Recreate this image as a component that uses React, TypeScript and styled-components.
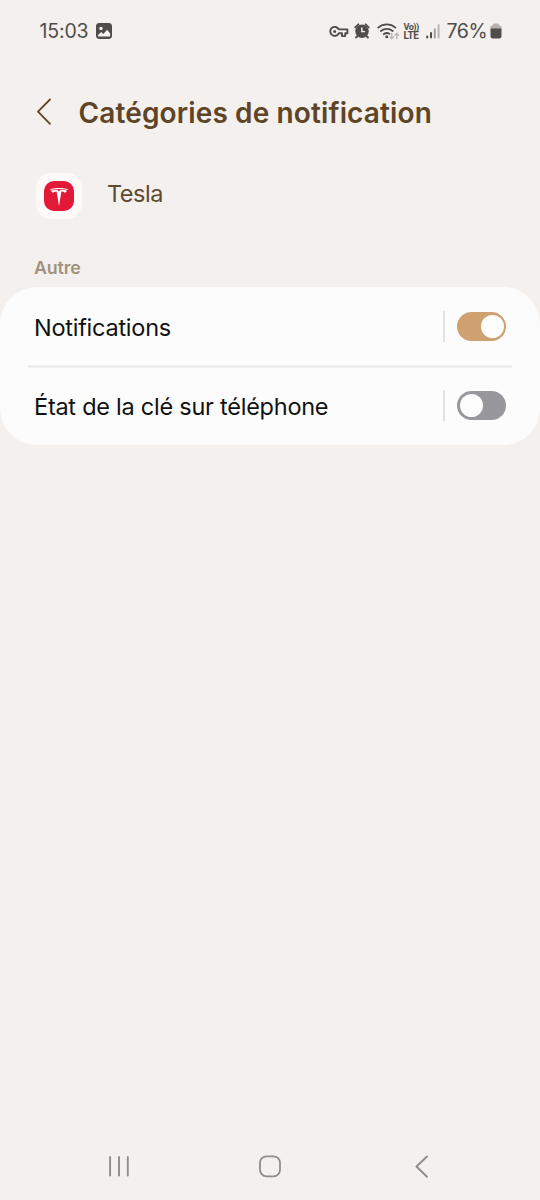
import React, { useState } from 'react';
import styled, { createGlobalStyle } from 'styled-components';

const GlobalStyle = createGlobalStyle`
  * { box-sizing: border-box; }
  body { margin: 0; background: #f4f0ed; }
`;

const Screen = styled.div`
  display: flex;
  flex-direction: column;
  width: 540px;
  height: 1200px;
  background: #f4f0ed;
  font-family: Inter, 'Liberation Sans', sans-serif;
  overflow: hidden;
`;

const StatusBar = styled.header`
  display: flex;
  justify-content: space-between;
  align-items: center;
  height: 62px;
  padding: 0 38px 0 39.5px;
  color: #4f4d4b;
`;

const StatusGroup = styled.div`
  display: flex;
  align-items: center;
  svg { display: block; flex: none; }
`;

const StatusText = styled.span<{ $spacing: number; $width: number }>`
  width: ${(p) => p.$width}px;
  font-size: 19.5px;
  line-height: 24px;
  letter-spacing: ${(p) => p.$spacing}px;
  white-space: nowrap;
`;

const TitleBar = styled.div`
  display: flex;
  align-items: center;
  height: 100px;
  padding-left: 36px;
`;

const BackButton = styled.button`
  display: flex;
  width: 42.5px;
  padding: 0;
  border: 0;
  background: none;
  color: #5f4527;
`;

const Title = styled.h1`
  margin: 1px 0 0;
  font-size: 28px;
  line-height: 36px;
  font-weight: 600;
  letter-spacing: 0.13px;
  color: #5f4527;
  white-space: nowrap;
`;

const AppRow = styled.div`
  display: flex;
  height: 90px;
  padding: 11px 0 0 36px;
`;

const AppIcon = styled.div`
  display: flex;
  align-items: center;
  justify-content: center;
  width: 46px;
  height: 46px;
  border-radius: 15px;
  background: #fcf9f8;
`;

const AppName = styled.div`
  margin-left: 25px;
  font-size: 23.5px;
  line-height: 41px;
  letter-spacing: -0.5px;
  color: #5f4a2f;
`;

const SectionLabel = styled.h2`
  margin: 0;
  height: 35px;
  padding: 4px 0 0 34px;
  font-size: 17.8px;
  line-height: 24px;
  font-weight: 600;
  letter-spacing: -0.1px;
  color: #a1927f;
`;

const Card = styled.section`
  height: 158px;
  border-radius: 37px;
  background: #fcfcfc;
`;

const Row = styled.div`
  display: flex;
  align-items: center;
  height: 79px;
  padding: 0 34px;
`;

const Divider = styled.hr`
  height: 2px;
  margin: -1px 28px;
  border: 0;
  background: #e6e6e6;
  transform: translateY(0.5px);
`;

const RowLabel = styled.span<{ $spacing: number }>`
  flex: 1;
  padding-top: 2px;
  font-size: 23.5px;
  line-height: 30px;
  letter-spacing: ${(p) => p.$spacing}px;
  color: #111;
  white-space: nowrap;
`;

const Separator = styled.span`
  width: 2px;
  height: 31px;
  margin-right: 12px;
  background: #e2e2e2;
`;

const Toggle = styled.button<{ $on: boolean }>`
  display: flex;
  align-items: center;
  justify-content: ${(p) => (p.$on ? 'flex-end' : 'flex-start')};
  width: 49px;
  height: 29px;
  padding: 0 2.5px;
  border: 0;
  border-radius: 15px;
  background: ${(p) => (p.$on ? '#cfa070' : '#98979c')};
`;

const Knob = styled.span`
  width: 23px;
  height: 23px;
  border-radius: 50%;
  background: #fdfdfd;
`;

const NavBar = styled.nav`
  display: flex;
  justify-content: space-between;
  align-items: center;
  height: 68px;
  margin-top: auto;
  padding: 0 107px;
  color: #8f8c8a;
`;

const NavButton = styled.button`
  display: flex;
  padding: 0;
  border: 0;
  background: none;
  color: inherit;
`;

const PictureIcon = () => (
  <svg width="16" height="16" viewBox="0 0 16 16">
    <rect width="16" height="16" rx="3.4" fill="currentColor" />
    <circle cx="5" cy="5.4" r="1.7" fill="#f4f0ed" />
    <path d="M1.8 12.2 5.2 9l2.2 2 3.7-4.2 3.1 3.7v1.7c0 .8-.5 1.3-1.3 1.3H3.1c-.8 0-1.3-.5-1.3-1.3Z" fill="#f4f0ed" />
  </svg>
);

const KeyIcon = () => (
  <svg width="20" height="13" viewBox="0 0 20 13" fill="none" stroke="currentColor" strokeWidth="1.9" strokeLinejoin="round">
    <path d="M9.8 4.4A4.5 4.5 0 1 0 9.8 8.3H13v2.8h3.2V8.3h2.2V4.4Z" />
    <circle cx="5.7" cy="6.4" r="1.5" fill="currentColor" stroke="none" />
  </svg>
);

const AlarmIcon = () => (
  <svg width="16" height="16" viewBox="0 0 16 16">
    <circle cx="8" cy="8.2" r="6.7" fill="currentColor" />
    <path d="M1.3 4.4 4.4 1.3M14.7 4.4 11.6 1.3M3.6 12.8 2.1 14.5M12.4 12.8l1.5 1.7" stroke="currentColor" strokeWidth="1.9" strokeLinecap="round" />
    <path d="M7.8 4.6v4h3.2" fill="none" stroke="#f4f0ed" strokeWidth="1.4" />
  </svg>
);

const WifiIcon = () => (
  <svg width="23" height="17" viewBox="0 0 23 17" fill="none" stroke="currentColor" strokeWidth="1.8" strokeLinecap="round">
    <path d="M1.2 4.6a13.2 13.2 0 0 1 17.2 0M3.9 8a9 9 0 0 1 11.8 0M6.8 11.2a5 5 0 0 1 5.6-.5" />
    <circle cx="9.8" cy="13.8" r="1.5" fill="currentColor" stroke="none" />
    <path d="M14.8 10.4v5M13 13.8l1.8 1.8 1.8-1.8M19.8 15.6v-5M18 12.2l1.8-1.8 1.8 1.8" stroke="#b3afac" strokeWidth="1.2" />
  </svg>
);

const VolteBadge = styled.span`
  display: flex;
  flex-direction: column;
  width: 17px;
  margin: 0 5px 0 4px;
  font-family: Roboto, sans-serif;
  font-size: 9.2px;
  line-height: 9px;
  font-weight: 700;
  letter-spacing: -0.6px;
  white-space: nowrap;
`;

const LteText = styled.span`
  font-size: 10px;
  letter-spacing: -0.4px;
`;

const SignalIcon = () => (
  <svg width="15" height="15" viewBox="0 0 15 15" fill="currentColor">
    <rect x="0.2" y="11.5" width="2" height="3" rx="1" />
    <rect x="4" y="8" width="2" height="6.5" rx="1" />
    <rect x="7.8" y="4.4" width="2" height="10.1" rx="1" opacity=".5" />
    <rect x="11.6" y="0.3" width="2" height="14.2" rx="1" opacity=".35" />
  </svg>
);

const BatteryIcon = () => (
  <svg width="12" height="16" viewBox="0 0 12 16">
    <path d="M.5 6V4.4C.5 3 1.4 2.3 2.8 2.2 3.2 1 4 .5 5 .5h2c1 0 1.8.5 2.2 1.7 1.4.1 2.3.8 2.3 2.2V6Z" fill="#b5b1ae" />
    <path d="M.5 5.5h11v7.6c0 1.5-.8 2.3-2.3 2.3H2.8C1.3 15.4.5 14.6.5 13.1Z" fill="currentColor" />
  </svg>
);

const TeslaIcon = () => (
  <svg width="30" height="30" viewBox="0 0 30 30">
    <rect width="30" height="30" rx="10" fill="#e31937" />
    <path d="M6.2 8.1C11.5 6.5 18.5 6.5 23.8 8.1L23.4 9.1C18.2 7.5 11.8 7.5 6.6 9.1Z" fill="#fff" />
    <path d="M7 9.8C9.3 9 11.5 8.7 13.4 8.7L15 10.6 16.6 8.7C18.5 8.7 20.7 9 23 9.8 22.6 10.9 21.7 11.5 20.5 11.7 20.1 10.9 19.2 10.7 17.4 10.5L15 25 12.6 10.5C10.8 10.7 9.9 10.9 9.5 11.7 8.3 11.5 7.4 10.9 7 9.8Z" fill="#fff" />
  </svg>
);

const Gap = styled.span<{ $size: number }>`
  width: ${(p) => p.$size}px;
`;

type Category = { name: string; spacing: number; enabled: boolean };

const initialCategories: Category[] = [
  { name: 'Notifications', spacing: -0.25, enabled: true },
  { name: 'État de la clé sur téléphone', spacing: -0.25, enabled: false },
];

export default function App() {
  const [categories, setCategories] = useState(initialCategories);
  const flip = (index: number) =>
    setCategories((list) => list.map((c, i) => (i === index ? { ...c, enabled: !c.enabled } : c)));

  return (
    <Screen>
      <GlobalStyle />
      <StatusBar>
        <StatusGroup>
          <StatusText $spacing={-0.15} $width={56.5}>15:03</StatusText>
          <PictureIcon />
        </StatusGroup>
        <StatusGroup>
          <KeyIcon />
          <Gap $size={5.5} />
          <AlarmIcon />
          <Gap $size={6.5} />
          <WifiIcon />
          <VolteBadge>
            <span>Vo))</span>
            <LteText>LTE</LteText>
          </VolteBadge>
          <SignalIcon />
          <Gap $size={6} />
          <StatusText $spacing={-0.4} $width={43.5}>76%</StatusText>
          <BatteryIcon />
        </StatusGroup>
      </StatusBar>
      <TitleBar>
        <BackButton aria-label="Retour">
          <svg width="16" height="28" viewBox="0 0 16 28" fill="none" stroke="currentColor" strokeWidth="1.8" strokeLinecap="round" strokeLinejoin="round">
            <path d="M14 1.5 2 13.7 14 25.9" />
          </svg>
        </BackButton>
        <Title>Catégories de notification</Title>
      </TitleBar>
      <AppRow>
        <AppIcon>
          <TeslaIcon />
        </AppIcon>
        <AppName>Tesla</AppName>
      </AppRow>
      <SectionLabel>Autre</SectionLabel>
      <Card>
        {categories.map((category, index) => (
          <React.Fragment key={category.name}>
            {index > 0 && <Divider />}
            <Row>
              <RowLabel $spacing={category.spacing}>{category.name}</RowLabel>
              <Separator />
              <Toggle
                $on={category.enabled}
                role="switch"
                aria-checked={category.enabled}
                aria-label={category.name}
                onClick={() => flip(index)}
              >
                <Knob />
              </Toggle>
            </Row>
          </React.Fragment>
        ))}
      </Card>
      <NavBar>
        <NavButton aria-label="Applications récentes">
          <svg width="24" height="24" viewBox="0 0 24 24" stroke="currentColor" strokeWidth="1.9" strokeLinecap="round">
            <path d="M3.1 3v18.6M12 3v18.6M20.8 3v18.6" />
          </svg>
        </NavButton>
        <NavButton aria-label="Accueil">
          <svg width="24" height="24" viewBox="0 0 24 24" fill="none" stroke="currentColor" strokeWidth="1.8">
            <rect x="2" y="2.3" width="20" height="20" rx="6.5" />
          </svg>
        </NavButton>
        <NavButton aria-label="Retour">
          <svg width="24" height="24" viewBox="0 0 24 24" fill="none" stroke="currentColor" strokeWidth="1.9" strokeLinecap="round" strokeLinejoin="round">
            <path d="M18 2.5 7.5 12.5 18 22.7" />
          </svg>
        </NavButton>
      </NavBar>
    </Screen>
  );
}
